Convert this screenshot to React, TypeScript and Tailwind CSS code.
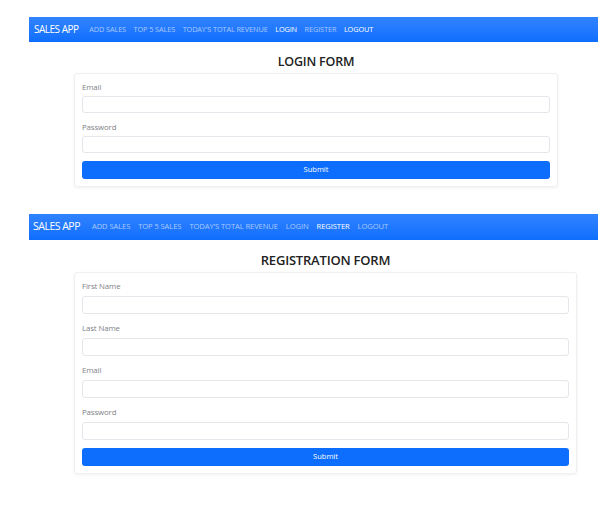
import React from "react";

const font = { fontFamily: '"Open Sans", "Noto Sans", sans-serif' };

function Navbar({ active, big }: { active: string[]; big?: boolean }) {
  const links = ["ADD SALES", "TOP 5 SALES", "TODAY'S TOTAL REVENUE", "LOGIN", "REGISTER", "LOGOUT"];
  return (
    <div
      className={
        "ml-[29px] w-[569px] flex items-center bg-gradient-to-b from-[#3183ff] to-[#0d6efd] " +
        (big ? "h-[26px] pl-[4px]" : "h-[25px] pl-[5px]")
      }
    >
      <span className={big ? "text-[10.5px] text-white mr-[8px] tracking-[-0.5px]" : "text-[10px] text-white mr-[7px] tracking-[-0.5px]"}>
        SALES APP
      </span>
      {links.map((l) => (
        <span
          key={l}
          className={
            (big ? "text-[7.6px] px-[4px]" : "text-[7.3px] px-[3.8px]") +
            " tracking-[-0.1px] " +
            (active.includes(l) ? "text-white" : "text-white/60")
          }
        >
          {l}
        </span>
      ))}
    </div>
  );
}

function Field({ label, big }: { label: string; big?: boolean }) {
  return (
    <div className="flex flex-col">
      <div className={"h-[12px] leading-[12px] text-[7.8px] text-[#7d8186] tracking-[-0.1px] " + (big ? "mb-[4px]" : "mb-[3px]")}>{label}</div>
      <div className={"border border-[#e3e6ea] rounded-[3px] bg-white " + (big ? "h-[18px]" : "h-[17px]")}></div>
    </div>
  );
}

export default function App() {
  return (
    <div className="w-[607px] h-[522px] bg-white overflow-hidden" style={font}>
      <div className="h-[17px]"></div>
      <Navbar active={["LOGIN", "LOGOUT"]} />
      <div className="ml-[74px] w-[484px]">
        <div className="h-[31px] flex items-center justify-center pt-[9px] text-[12.5px] font-semibold text-[#222] tracking-[-0.2px]">
          LOGIN FORM
        </div>
        <div className="border border-[#f0f0f0] rounded-[3px] shadow-[0_1px_3px_rgba(0,0,0,0.06)] px-[7px] py-[7px] flex flex-col gap-[8px]">
          <Field label="Email" />
          <Field label="Password" />
          <div className="h-[18px] rounded-[3px] bg-[#0d6efd] text-white text-[7.5px] flex items-center justify-center">Submit</div>
        </div>
      </div>
      <div className="h-[27px]"></div>
      <Navbar active={["REGISTER"]} big />
      <div className="ml-[74px] w-[503px]">
        <div className="h-[32px] flex items-center justify-center pt-[9px] text-[13px] font-semibold text-[#222] tracking-[-0.2px]">
          REGISTRATION FORM
        </div>
        <div className="border border-[#f0f0f0] rounded-[3px] shadow-[0_1px_3px_rgba(0,0,0,0.06)] px-[7px] py-[7px] flex flex-col gap-[8px]">
          <Field label="First Name" big />
          <Field label="Last Name" big />
          <Field label="Email" big />
          <Field label="Password" big />
          <div className="h-[18px] rounded-[3px] bg-[#0d6efd] text-white text-[7.5px] flex items-center justify-center">Submit</div>
        </div>
      </div>
    </div>
  );
}
